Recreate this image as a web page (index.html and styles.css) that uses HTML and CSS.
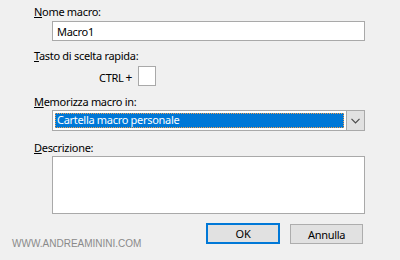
FILE: index.html
```html
<!DOCTYPE html>
<html>
<head>
<meta charset="utf-8">
<link rel="stylesheet" href="styles.css">
</head>
<body>
<div class="dialog">
  <div class="label l1"><u>N</u>ome macro:</div>
  <div class="field input1">Macro1</div>
  <div class="label l2"><u>T</u>asto di scelta rapida:</div>
  <div class="shortcut"><span class="ctrl">CTRL</span><span class="plus">+</span><span class="keybox"></span></div>
  <div class="label l3"><u>M</u>emorizza macro in:</div>
  <div class="select">
    <div class="sel-value"><span class="sel-text">Cartella macro personale</span></div>
    <div class="sel-btn"><svg width="9" height="6" viewBox="0 0 9 6"><polyline points="0.5,0.8 4.5,4.8 8.5,0.8" fill="none" stroke="#4a4a4a" stroke-width="1.2"/></svg></div>
  </div>
  <div class="label l4"><u>D</u>escrizione:</div>
  <div class="field textarea"></div>
  <div class="footer">
    <div class="watermark">WWW.ANDREAMININI.COM</div>
    <div class="buttons">
      <div class="btn btn-ok">OK</div>
      <div class="btn btn-cancel">Annulla</div>
    </div>
  </div>
</div>
</body>
</html>
```
FILE: styles.css
```css
html, body {
  margin: 0;
  padding: 0;
  background: #f0f0f0;
}
body {
  width: 400px;
  height: 260px;
  overflow: hidden;
  font-family: "Noto Sans", "Open Sans", sans-serif;
  font-size: 11px;
  letter-spacing: -0.3px;
  line-height: 15px;
  color: #000;
}
.dialog {
  display: flex;
  flex-direction: column;
  padding-top: 4px;
}
.label {
  margin-left: 34px;
  height: 15px;
}
.label u {
  text-decoration-thickness: 1px;
  text-underline-offset: 1px;
}
.field {
  box-sizing: border-box;
  background: #fff;
  border: 1px solid #a9a9a9;
  margin-left: 52px;
  width: 313px;
}
.input1 {
  margin-top: 2px;
  height: 20px;
  padding: 2px 0 0 4px;
}
.l2 { margin-top: 7px; }
.shortcut {
  display: flex;
  align-items: center;
  margin-top: 3px;
  margin-left: 99px;
  height: 20px;
}
.ctrl {
  margin-top: 2px;
}
.plus {
  margin-top: 2px;
  margin-left: 2px;
  margin-right: 6px;
  font-size: 12px;
}
.keybox {
  box-sizing: border-box;
  width: 18px;
  height: 20px;
  background: #fff;
  border: 1px solid #a9a9a9;
}
.l3 { margin-top: 8px; }
.select {
  box-sizing: border-box;
  display: flex;
  margin-left: 52px;
  margin-top: 1px;
  width: 313px;
  height: 21px;
  border: 1px solid #a9a9a9;
  background: #fff;
}
.sel-value {
  flex: 1;
  padding: 2px;
  display: flex;
}
.sel-text {
  flex: 1;
  box-sizing: border-box;
  background: #0078d7;
  color: #fff;
  padding-left: 2px;
  line-height: 13px;
  outline: 1px dotted #f0a050;
  outline-offset: -1px;
}
.sel-btn {
  width: 17px;
  background: #e1e1e1;
  border-left: 1px solid #a9a9a9;
  display: flex;
  align-items: center;
  justify-content: center;
}
.l4 { margin-top: 9px; }
.textarea {
  margin-top: 1px;
  height: 58px;
}
.footer {
  display: flex;
  justify-content: space-between;
  margin-top: 9px;
}
.watermark {
  font-family: "Liberation Sans", Arial, sans-serif;
  font-size: 10px;
  letter-spacing: 0;
  color: #8a8a8a;
  margin-left: 12px;
  margin-top: 13px;
}
.buttons {
  display: flex;
  gap: 10px;
  margin-right: 37px;
}
.btn {
  box-sizing: border-box;
  width: 74px;
  height: 21px;
  background: #e1e1e1;
  border: 1px solid #adadad;
  display: flex;
  align-items: center;
  justify-content: center;
}
.btn-ok {
  border: 2px solid #0078d7;
}
.btn-cancel {
  width: 73px;
  margin-top: 1px;
  height: 20px;
}
```
